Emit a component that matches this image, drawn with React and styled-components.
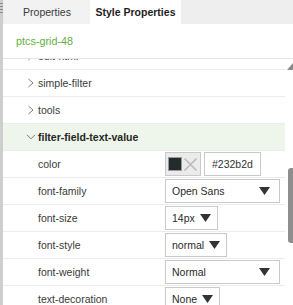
import React from 'react';
import styled, { createGlobalStyle } from 'styled-components';

const GlobalStyle = createGlobalStyle`
  html, body {
    margin: 0;
    padding: 0;
    background: #fff;
    overflow: hidden;
  }
  body {
    font-family: "Liberation Sans", Arial, sans-serif;
    font-size: 10.5px;
    color: #333;
  }
`;

const Panel = styled.div`
  width: 293px;
  height: 305px;
  display: flex;
  overflow: hidden;
  background: #fff;
`;

const LeftEdge = styled.div`
  width: 3px;
  flex: none;
  background: #cecece;
  padding-top: 3px;
  box-sizing: border-box;
`;

const Grip = styled.div`
  width: 3px;
  height: 10px;
  background: repeating-linear-gradient(
    to bottom,
    #8a8a8a 0px,
    #8a8a8a 1px,
    transparent 1px,
    transparent 3px
  );
`;

const Main = styled.div`
  flex: 1;
  display: flex;
  flex-direction: column;
  min-width: 0;
`;

const TabBar = styled.div`
  height: 24px;
  flex: none;
  display: flex;
  background: #eeeeee;
  padding-left: 1px;
`;

const Tab = styled.div`
  width: ${p => p.$width}px;
  display: flex;
  align-items: center;
  justify-content: center;
  background: ${p => (p.$active ? '#fff' : '#f2f2f2')};
  font-weight: ${p => (p.$active ? 'bold' : 'normal')};
  color: ${p => (p.$active ? '#1e1e1e' : '#3a3a3a')};
`;

const Title = styled.div`
  height: 34px;
  flex: none;
  display: flex;
  align-items: center;
  padding-left: 13px;
  color: #62b040;
  font-size: 10.8px;
  border-bottom: 1px solid #e6e6e6;
`;

const ListArea = styled.div`
  flex: 1;
  display: flex;
  min-height: 0;
`;

const List = styled.div`
  flex: 1;
  overflow: hidden;
`;

const ListInner = styled.div`
  margin-top: -16px;
`;

const GroupRow = styled.div`
  height: 26px;
  display: flex;
  align-items: center;
  padding-left: 21px;
  border-bottom: 1px solid #ececec;
  background: ${p => (p.$open ? '#eef5ea' : '#fff')};
  font-weight: ${p => (p.$open ? 'bold' : 'normal')};
  color: ${p => (p.$open ? '#252525' : '#3a3a3a')};
`;

const ChevronBox = styled.span`
  width: 14px;
  display: flex;
  justify-content: center;
`;

const PropRow = styled.div`
  height: 26px;
  display: flex;
  align-items: center;
  border-bottom: 1px solid #ececec;
`;

const PropLabel = styled.div`
  width: 162px;
  padding-left: 35px;
  box-sizing: border-box;
  color: #3a3a3a;
  flex: none;
`;

const ColorControls = styled.div`
  display: flex;
  gap: 3px;
`;

const SwatchBox = styled.div`
  width: 36px;
  height: 24px;
  box-sizing: border-box;
  border: 1px solid #c9c9c9;
  background: #ebebeb;
  display: flex;
  align-items: center;
  padding-left: 3px;
  gap: 2px;
`;

const Swatch = styled.div`
  width: 12px;
  height: 12px;
  background: ${p => p.$color};
  box-shadow: 0 0 0 1px #9a9a9a;
`;

const HexInput = styled.div`
  width: 57px;
  height: 24px;
  box-sizing: border-box;
  border: 1px solid #c9c9c9;
  background: #fff;
  display: flex;
  align-items: center;
  padding-left: 7px;
  color: #333;
`;

const Select = styled.div`
  height: 24px;
  box-sizing: border-box;
  border: 1px solid #c9c9c9;
  background: #fff;
  display: flex;
  align-items: center;
  width: ${p => (p.$wide ? '115px' : 'auto')};
  justify-content: ${p => (p.$wide ? 'space-between' : 'flex-start')};
  gap: 5px;
  padding: 0 ${p => (p.$wide ? 9 : 6)}px 0 6px;
  color: #2a2a2a;
`;

const Scrollbar = styled.div`
  width: 8px;
  flex: none;
  display: flex;
  flex-direction: column;
  align-items: flex-end;
  padding-top: 4px;
`;

const UpArrow = styled.svg`
  width: 6px;
  height: 7px;
  display: block;
`;

const Thumb = styled.div`
  width: 5px;
  height: 75px;
  margin-top: 98px;
  background: #8e8e8e;
  border-radius: 3px 0 0 3px;
`;

const ChevronRight = () => (
  <svg width="8" height="10" viewBox="0 0 8 10">
    <polyline points="1.5,1 6,5 1.5,9" fill="none" stroke="#7a7a7a" strokeWidth="1" />
  </svg>
);

const ChevronDown = () => (
  <svg width="10" height="6" viewBox="0 0 10 6">
    <polyline points="1,0.8 5,4.8 9,0.8" fill="none" stroke="#7a7a7a" strokeWidth="1" />
  </svg>
);

const Caret = () => (
  <svg width="11" height="8" viewBox="0 0 11 8">
    <polygon points="0,0 11,0 5.5,8" fill="#333" />
  </svg>
);

const ClearIcon = () => (
  <svg width="15" height="15" viewBox="0 0 15 15">
    <path d="M1.5 1.5 L13.5 13.5 M13.5 1.5 L1.5 13.5" stroke="#bcbcbc" strokeWidth="1.6" />
  </svg>
);

const groups = ['edit-html', 'simple-filter', 'tools'];

const props = [
  { name: 'font-family', value: 'Open Sans', wide: true },
  { name: 'font-size', value: '14px' },
  { name: 'font-style', value: 'normal' },
  { name: 'font-weight', value: 'Normal', wide: true },
  { name: 'text-decoration', value: 'None' },
];

export default function App() {
  return (
    <>
      <GlobalStyle />
      <Panel>
        <LeftEdge>
          <Grip />
        </LeftEdge>
        <Main>
          <TabBar>
            <Tab $width={86}>Properties</Tab>
            <Tab $width={91} $active>Style Properties</Tab>
          </TabBar>
          <Title>ptcs-grid-48</Title>
          <ListArea>
            <List>
              <ListInner>
                {groups.map(g => (
                  <GroupRow key={g}>
                    <ChevronBox><ChevronRight /></ChevronBox>
                    {g}
                  </GroupRow>
                ))}
                <GroupRow $open>
                  <ChevronBox><ChevronDown /></ChevronBox>
                  filter-field-text-value
                </GroupRow>
                <PropRow>
                  <PropLabel>color</PropLabel>
                  <ColorControls>
                    <SwatchBox>
                      <Swatch $color="#232b2d" />
                      <ClearIcon />
                    </SwatchBox>
                    <HexInput>#232b2d</HexInput>
                  </ColorControls>
                </PropRow>
                {props.map(p => (
                  <PropRow key={p.name}>
                    <PropLabel>{p.name}</PropLabel>
                    <Select $wide={p.wide}>
                      <span>{p.value}</span>
                      <Caret />
                    </Select>
                  </PropRow>
                ))}
              </ListInner>
            </List>
            <Scrollbar>
              <UpArrow viewBox="0 0 6 7">
                <polygon points="6,0 6,7 0,7" fill="#8a8a8a" />
              </UpArrow>
              <Thumb />
            </Scrollbar>
          </ListArea>
        </Main>
      </Panel>
    </>
  );
}
